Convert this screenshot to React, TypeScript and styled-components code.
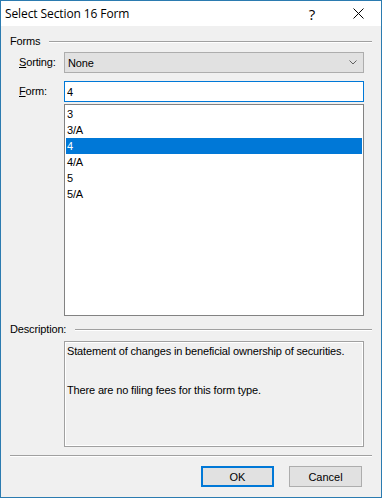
import React, { useState } from 'react';
import styled, { createGlobalStyle } from 'styled-components';

const GlobalStyle = createGlobalStyle`
  html, body {
    margin: 0;
    padding: 0;
    background: #f0f0f0;
  }
  * {
    box-sizing: border-box;
  }
`;

const arForms: string[] = ['3', '3/A', '4', '4/A', '5', '5/A'];

const App = () => {
  const [sSelected, setSelected] = useState('4');

  return (
    <Window>
      <GlobalStyle />
      <TitleBar>
        <Caption>Select Section 16 Form</Caption>
        <CaptionButton title='Help'>?</CaptionButton>
        <CaptionButton title='Close'>
          <svg width='11' height='11' viewBox='0 0 11 11'>
            <path
              d='M0.5 0.5 L10.5 10.5 M10.5 0.5 L0.5 10.5'
              stroke='#000'
              strokeWidth='1'
              fill='none'
            />
          </svg>
        </CaptionButton>
      </TitleBar>

      <Body>
        <GroupHeader>
          <GroupLabel>Forms</GroupLabel>
          <EtchedLine />
        </GroupHeader>

        <FieldRow iTop={3}>
          <FieldLabel>
            <u>S</u>orting:
          </FieldLabel>
          <ComboBox>
            <span>None</span>
            <svg width='8' height='5' viewBox='0 0 8 5'>
              <path
                d='M0.5 0.5 L4 4 L7.5 0.5'
                stroke='#606060'
                strokeWidth='1'
                fill='none'
              />
            </svg>
          </ComboBox>
        </FieldRow>

        <FieldRow iTop={8}>
          <FieldLabel>
            <u>F</u>orm:
          </FieldLabel>
          <Column>
            <TextInput value={sSelected} readOnly />
            <ListBox>
              {arForms.map((sForm) => (
                <ListItem
                  key={sForm}
                  bSelected={sForm === sSelected}
                  onClick={() => setSelected(sForm)}
                >
                  {sForm}
                </ListItem>
              ))}
            </ListBox>
          </Column>
        </FieldRow>

        <DescHeader>
          <GroupLabel>Description:</GroupLabel>
          <EtchedLine />
        </DescHeader>

        <DescBox>
          <p>Statement of changes in beneficial ownership of securities.</p>
          <p>There are no filing fees for this form type.</p>
        </DescBox>

        <Separator />

        <ButtonBar>
          <DialogButton bDefault type='button'>
            OK
          </DialogButton>
          <DialogButton type='button'>Cancel</DialogButton>
        </ButtonBar>
      </Body>
    </Window>
  );
};

const Window = styled.div`
  width: 382px;
  height: 498px;
  border: 1px solid #2b7bb0;
  background: #f0f0f0;
  display: flex;
  flex-direction: column;
  font-family: 'Liberation Sans', Arial, sans-serif;
  font-size: 11px;
  letter-spacing: -0.15px;
  color: #000;
`;

const TitleBar = styled.div`
  height: 25px;
  background: #ffffff;
  display: flex;
  align-items: center;
`;

const Caption = styled.div`
  flex: 1;
  padding-left: 4px;
  font-family: 'Open Sans', 'Noto Sans', sans-serif;
  font-size: 12px;
  letter-spacing: -0.1px;
`;

const CaptionButton = styled.div`
  width: 46px;
  height: 25px;
  display: flex;
  align-items: center;
  justify-content: center;
  font-family: 'Open Sans', 'Noto Sans', sans-serif;
  font-size: 15px;
`;

const Body = styled.div`
  flex: 1;
  display: flex;
  flex-direction: column;
  padding: 0 9px;
`;

const GroupHeader = styled.div`
  height: 16px;
  margin-top: 7px;
  display: flex;
  align-items: center;
`;

const DescHeader = styled(GroupHeader)`
  margin-top: 5px;
`;

const GroupLabel = styled.span`
  margin-right: 9px;
  white-space: nowrap;
`;

const EtchedLine = styled.div`
  flex: 1;
  height: 2px;
  border-top: 1px solid #a0a0a0;
  border-bottom: 1px solid #ffffff;
  margin-top: 1px;
`;

const FieldRow = styled.div<{ iTop: number }>`
  display: flex;
  align-items: flex-start;
  margin-top: ${(props) => props.iTop}px;
`;

const FieldLabel = styled.div`
  width: 45px;
  margin-left: 9px;
  height: 21px;
  line-height: 21px;

  u {
    text-decoration-thickness: 1px;
    text-underline-offset: 1px;
  }
`;

const Column = styled.div`
  display: flex;
  flex-direction: column;
  width: 300px;
`;

const ComboBox = styled.div`
  width: 300px;
  height: 21px;
  border: 1px solid #adadad;
  background: #e1e1e1;
  display: flex;
  align-items: center;
  justify-content: space-between;
  padding: 0 6px 0 3px;
`;

const TextInput = styled.input`
  width: 300px;
  height: 21px;
  border: 1px solid #0078d7;
  background: #ffffff;
  padding: 0 2px;
  font-family: inherit;
  font-size: 11px;
  color: #000;
  outline: none;
`;

const ListBox = styled.div`
  margin-top: 2px;
  height: 212px;
  border: 1px solid #828282;
  background: #ffffff;
  padding: 1px;
`;

const ListItem = styled.div<{ bSelected?: boolean }>`
  height: 16px;
  line-height: 16px;
  padding-left: 1px;
  background: ${(props) => (props.bSelected ? '#0078d7' : 'transparent')};
  color: ${(props) => (props.bSelected ? '#ffffff' : '#000000')};
  cursor: default;
`;

const DescBox = styled.div`
  margin: 4px 0 0 54px;
  width: 300px;
  height: 106px;
  border: 1px solid #a0a0a0;
  box-shadow: inset 0 0 0 1px #ffffff;
  padding: 3px 2px;

  p {
    margin: 0 0 26px 0;
    line-height: 13px;
  }
`;

const Separator = styled.div`
  margin-top: 8px;
  height: 2px;
  border-top: 1px solid #a0a0a0;
  border-bottom: 1px solid #ffffff;
`;

const ButtonBar = styled.div`
  display: flex;
  justify-content: flex-end;
  gap: 15px;
  margin-top: 9px;
  padding-right: 10px;
`;

const DialogButton = styled.button<{ bDefault?: boolean }>`
  width: 73px;
  height: 21px;
  padding: 0;
  background: #e1e1e1;
  border: ${(props) =>
    props.bDefault ? '2px solid #0078d7' : '1px solid #adadad'};
  font-family: inherit;
  font-size: 11px;
  color: #000;
`;

export default App;
